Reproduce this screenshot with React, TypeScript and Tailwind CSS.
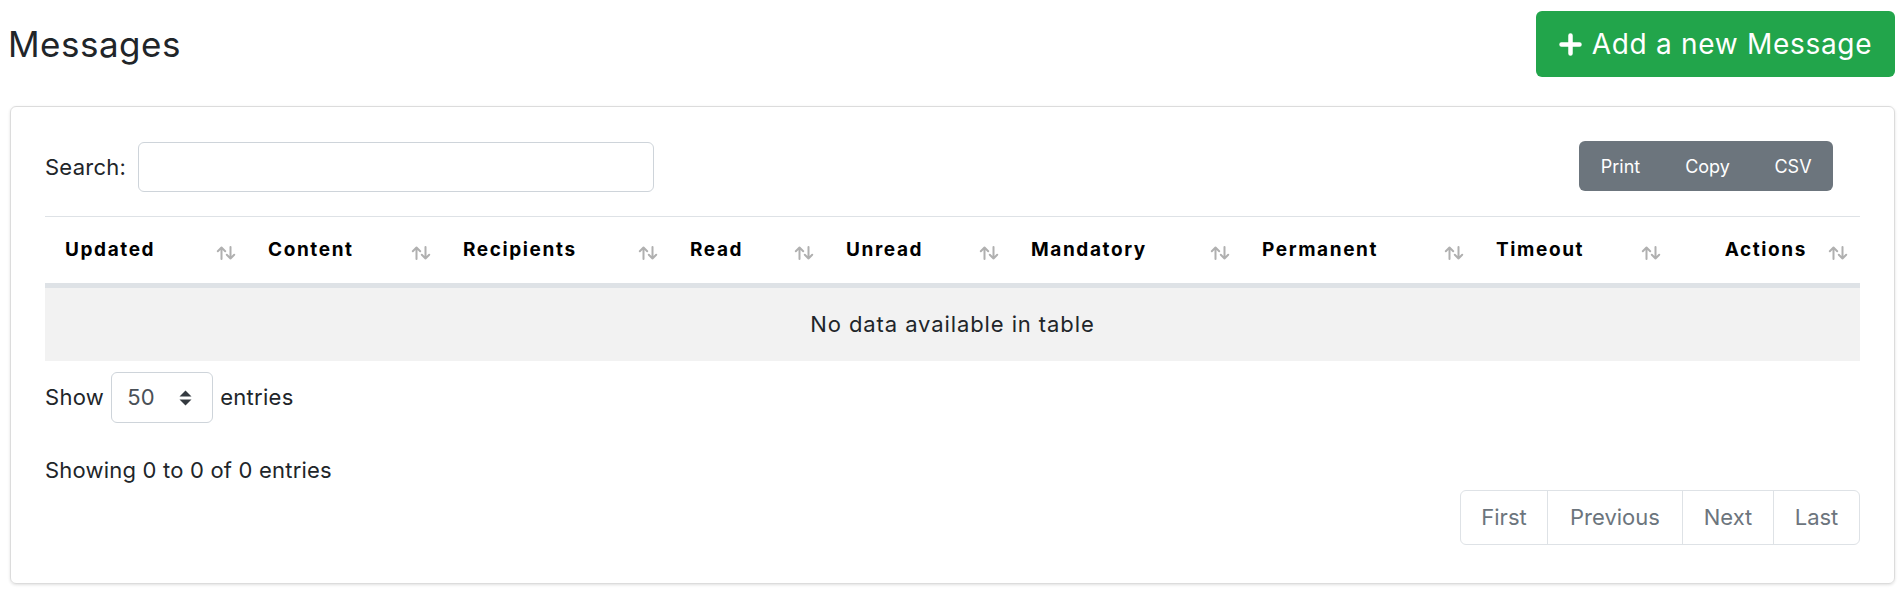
import { useState } from 'react'

const columns = [
  { key: 'updated', label: 'Updated', width: 'w-[203px]' },
  { key: 'content', label: 'Content', width: 'w-[195px]' },
  { key: 'recipients', label: 'Recipients', width: 'w-[227px]' },
  { key: 'read', label: 'Read', width: 'w-[156px]' },
  { key: 'unread', label: 'Unread', width: 'w-[185px]' },
  { key: 'mandatory', label: 'Mandatory', width: 'w-[231px]' },
  { key: 'permanent', label: 'Permanent', width: 'w-[234px]' },
  { key: 'timeout', label: 'Timeout', width: 'w-[197px]' },
]

function SortIcon() {
  return (
    <svg width="20" height="14" viewBox="0 0 20 14" className="shrink-0 mt-[6px]" fill="none" stroke="#b0b0b0" strokeWidth="2" strokeLinecap="round" strokeLinejoin="round">
      <path d="M5.5 13V1.5M1.8 5.2L5.5 1.5l3.7 3.7" />
      <path d="M14.5 1V12.5M10.8 8.8l3.7 3.7 3.7-3.7" />
    </svg>
  )
}

function PlusIcon() {
  return (
    <svg width="23" height="23" viewBox="0 0 23 23" fill="none" stroke="white" strokeWidth="4.5" strokeLinecap="round">
      <path d="M11.5 2.5v18M2.5 11.5h18" />
    </svg>
  )
}

function SelectArrows() {
  return (
    <svg width="13" height="16" viewBox="0 0 13 16" fill="#343a40">
      <path d="M6.5 0.5L12.5 6.5H0.5Z" />
      <path d="M6.5 15.5L0.5 9.5H12.5Z" />
    </svg>
  )
}

export default function App() {
  const [search, setSearch] = useState('')

  return (
    <div className="min-h-screen bg-white pl-[10px] pr-[9px] pt-[11px] font-['Inter','Noto_Sans',sans-serif] text-[#212529]">
      {/* header */}
      <div className="flex h-[66px] items-center justify-between">
        <h1 className="-ml-[2px] text-[35px] font-normal leading-none tracking-[0.5px]">Messages</h1>
        <button className="flex h-[66px] w-[359px] items-center justify-center gap-[10px] rounded-[6px] bg-[#22a54b] text-[28px] text-white">
          <PlusIcon />
          <span className="tracking-[0.7px]">Add a new Message</span>
        </button>
      </div>

      {/* card */}
      <div className="mt-[29px] h-[478px] rounded-[6px] border border-[#dcdcdc] px-[34px] pt-[35px] shadow-[0_1px_3px_rgba(0,0,0,0.12)]">
        {/* search + buttons */}
        <div className="flex h-[50px] items-center justify-between">
          <div className="flex items-center">
            <label className="text-[22px] tracking-[0.25px]">Search:</label>
            <input
              value={search}
              onChange={e => setSearch(e.target.value)}
              className="ml-[12px] h-[50px] w-[516px] rounded-[6px] border border-[#ced4da] px-3 text-[22px] outline-none"
            />
          </div>
          <div className="mr-[27px] -mt-[2px] flex h-[50px] w-[254px] overflow-hidden rounded-[6px] bg-[#6c757d] text-[18px] text-white">
            <button className="w-[83px]">Print</button>
            <button className="w-[91px]">Copy</button>
            <button className="w-[80px]">CSV</button>
          </div>
        </div>

        {/* table */}
        <div className="mt-[24px] border-t border-[#dee2e6]">
          <div className="flex h-[71px] border-b-[5px] border-[#dee2e6]">
            {columns.map(c => (
              <div key={c.key} className={`${c.width} flex items-center justify-between pl-[20px] pr-[12px]`}>
                <span className="text-[19px] font-bold tracking-[1.6px] text-black">{c.label}</span>
                <SortIcon />
              </div>
            ))}
            <div className="flex w-[187px] items-center justify-end gap-[21px] pr-[12px]">
              <span className="text-[19px] font-bold tracking-[1.6px] text-black">Actions</span>
              <SortIcon />
            </div>
          </div>
          <div className="flex h-[73px] items-center justify-center bg-[#f2f2f2] text-[22px] tracking-[0.9px]">
            No data available in table
          </div>
        </div>

        {/* length */}
        <div className="mt-[11px] flex items-center text-[22px] tracking-[0.3px]">
          <span>Show</span>
          <div className="mx-[7px] flex h-[51px] w-[102px] items-center justify-between rounded-[6px] border border-[#ced4da] pl-[15px] pr-[20px] text-[#495057]">
            <span className="text-[22px]">50</span>
            <SelectArrows />
          </div>
          <span>entries</span>
        </div>

        <div className="mt-[32px] h-[30px] text-[22px] leading-[30px] tracking-[0.2px]">Showing 0 to 0 of 0 entries</div>

        {/* pagination */}
        <div className="mt-[5px] flex justify-end">
          <div className="flex h-[55px] overflow-hidden rounded-[6px] border border-[#dee2e6] text-[22px] text-[#6c757d]">
            <button className="w-[86px]">First</button>
            <button className="w-[135px] border-l border-[#dee2e6]">Previous</button>
            <button className="w-[91px] border-l border-[#dee2e6]">Next</button>
            <button className="w-[86px] border-l border-[#dee2e6]">Last</button>
          </div>
        </div>
      </div>
    </div>
  )
}
